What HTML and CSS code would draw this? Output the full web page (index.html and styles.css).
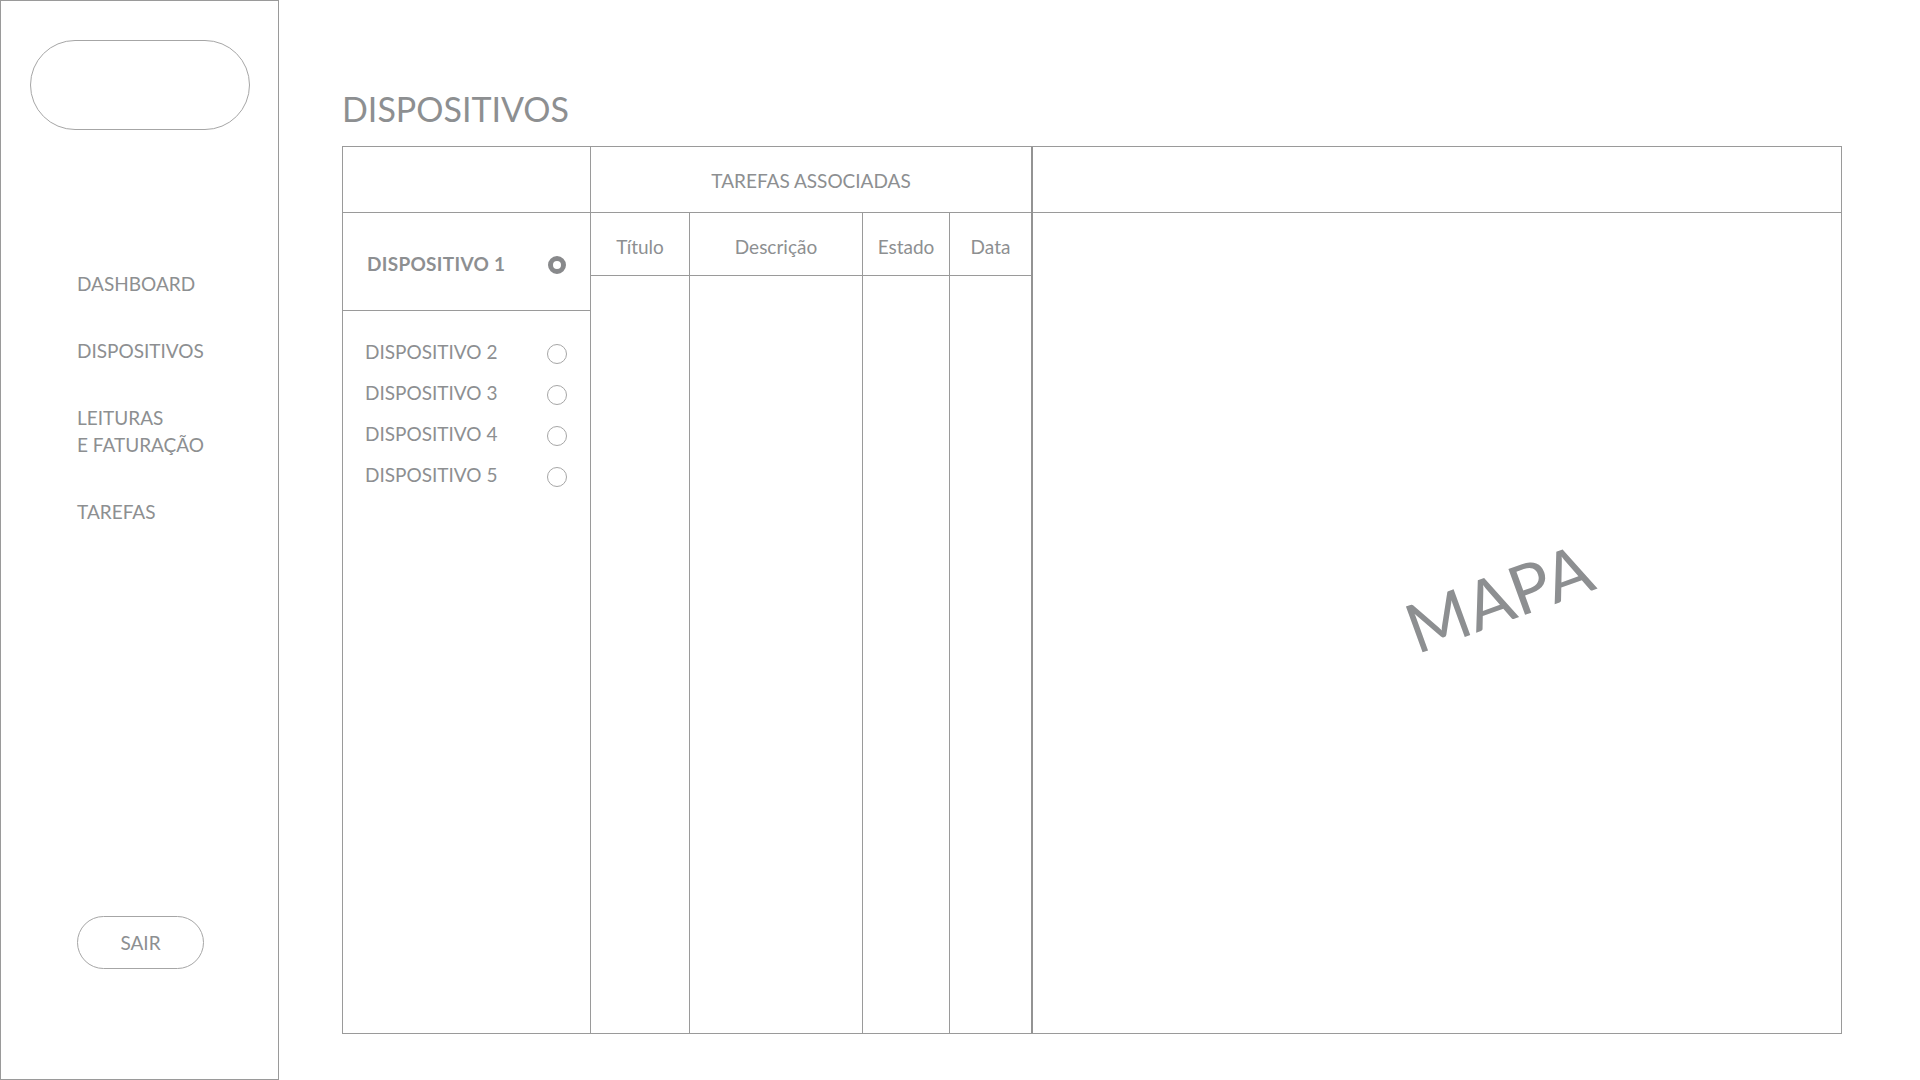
FILE: index.html
```html
<!DOCTYPE html>
<html lang="pt">
<head>
<meta charset="utf-8">
<title>Dispositivos</title>
<link rel="stylesheet" href="styles.css">
</head>
<body>
<div class="app">
  <aside class="sidebar">
    <div class="logo"></div>
    <nav class="nav">
      <a class="nav-item">DASHBOARD</a>
      <a class="nav-item">DISPOSITIVOS</a>
      <a class="nav-item">LEITURAS<br>E FATURAÇÃO</a>
      <a class="nav-item">TAREFAS</a>
    </nav>
    <button class="logout">SAIR</button>
  </aside>
  <main class="main">
    <h1 class="title">DISPOSITIVOS</h1>
    <section class="board">
      <div class="col devices">
        <div class="col-head"></div>
        <div class="device selected"><span>DISPOSITIVO 1</span><span class="radio on"></span></div>
        <ul class="device-list">
          <li class="device"><span>DISPOSITIVO 2</span><span class="radio"></span></li>
          <li class="device"><span>DISPOSITIVO 3</span><span class="radio"></span></li>
          <li class="device"><span>DISPOSITIVO 4</span><span class="radio"></span></li>
          <li class="device"><span>DISPOSITIVO 5</span><span class="radio"></span></li>
        </ul>
      </div>
      <div class="col tasks">
        <div class="col-head tasks-head">TAREFAS ASSOCIADAS</div>
        <div class="task-grid">
          <div class="th">Título</div>
          <div class="th">Descrição</div>
          <div class="th">Estado</div>
          <div class="th last">Data</div>
          <div class="td"></div>
          <div class="td"></div>
          <div class="td"></div>
          <div class="td last"></div>
        </div>
      </div>
      <div class="col map">
        <div class="col-head"></div>
        <div class="map-body"><span class="map-label">MAPA</span></div>
      </div>
    </section>
  </main>
</div>
</body>
</html>
```
FILE: styles.css
```css
* { box-sizing: border-box; }

body {
  margin: 0;
  font-family: Lato, "Open Sans", sans-serif;
  color: #8d8f91;
  background: #fff;
}

.app {
  display: flex;
  width: 1920px;
  height: 1080px;
}

/* Sidebar */
.sidebar {
  width: 279px;
  height: 1080px;
  border: 1px solid #9a9a9a;
  display: flex;
  flex-direction: column;
  padding: 39px 0 110px 0;
  flex-shrink: 0;
}

.logo {
  margin-left: 29px;
  width: 220px;
  height: 90px;
  border: 1px solid #a6a6a6;
  border-radius: 45px;
}

.nav {
  margin-top: 140px;
  padding-left: 76px;
  display: flex;
  flex-direction: column;
  gap: 40px;
}

.nav-item {
  font-size: 19px;
  line-height: 27px;
  color: #8d8f91;
}

.logout {
  margin-top: auto;
  margin-left: 76px;
  width: 127px;
  height: 53px;
  border: 1px solid #a6a6a6;
  border-radius: 27px;
  background: #fff;
  font-family: Lato, "Open Sans", sans-serif;
  font-size: 19px;
  color: #8d8f91;
  padding: 0;
}

/* Main */
.main {
  flex: 1;
  display: flex;
  flex-direction: column;
  padding: 87px 78px 46px 63px;
}

.title {
  margin: 0 0 16px;
  font-size: 34px;
  line-height: 43px;
  font-weight: 400;
  color: #8d8f91;
}

.board {
  flex: 1;
  display: flex;
  border: 1px solid #9a9a9a;
}

.col {
  display: flex;
  flex-direction: column;
}

.col-head {
  height: 66px;
  border-bottom: 1px solid #9a9a9a;
  flex-shrink: 0;
}

.devices {
  width: 248px;
  border-right: 1px solid #9a9a9a;
}

.device {
  display: flex;
  justify-content: space-between;
  align-items: center;
  font-size: 19px;
}

.device.selected {
  height: 98px;
  border-bottom: 1px solid #9a9a9a;
  padding: 37px 24px 0 24px;
  align-items: flex-start;
  line-height: 27px;
  font-weight: 700;
  letter-spacing: 0.3px;
}

.device-list {
  list-style: none;
  margin: 0;
  padding: 20px 23px 0 22px;
}

.device-list .device {
  line-height: 41px;
}

.radio {
  width: 20px;
  height: 20px;
  border: 1px solid #a6a6a6;
  border-radius: 50%;
  margin-top: 5px;
  flex-shrink: 0;
}

.radio.on {
  width: 18px;
  height: 18px;
  border: 5px solid #88898b;
  margin-top: 6px;
  margin-right: 0;
}

.tasks {
  width: 442px;
  border-right: 2px solid #939393;
}

.tasks-head {
  text-align: center;
  font-size: 19px;
  line-height: 27px;
  padding-top: 20px;
}

.task-grid {
  flex: 1;
  display: grid;
  grid-template-columns: 99px 173px 87px 1fr;
  grid-template-rows: 63px 1fr;
}

.th {
  border-bottom: 1px solid #9a9a9a;
  border-right: 1px solid #9a9a9a;
  text-align: center;
  font-size: 19px;
  line-height: 27px;
  padding-top: 20px;
}

.td {
  border-right: 1px solid #9a9a9a;
}

.th.last, .td.last {
  border-right: none;
}

.map {
  flex: 1;
}

.map-body {
  flex: 1;
  display: flex;
  align-items: center;
  justify-content: center;
}

.map-label {
  font-size: 68px;
  line-height: 1;
  color: #8d8f91;
  transform: translate(61px, -26px) rotate(-20deg);
}
```
